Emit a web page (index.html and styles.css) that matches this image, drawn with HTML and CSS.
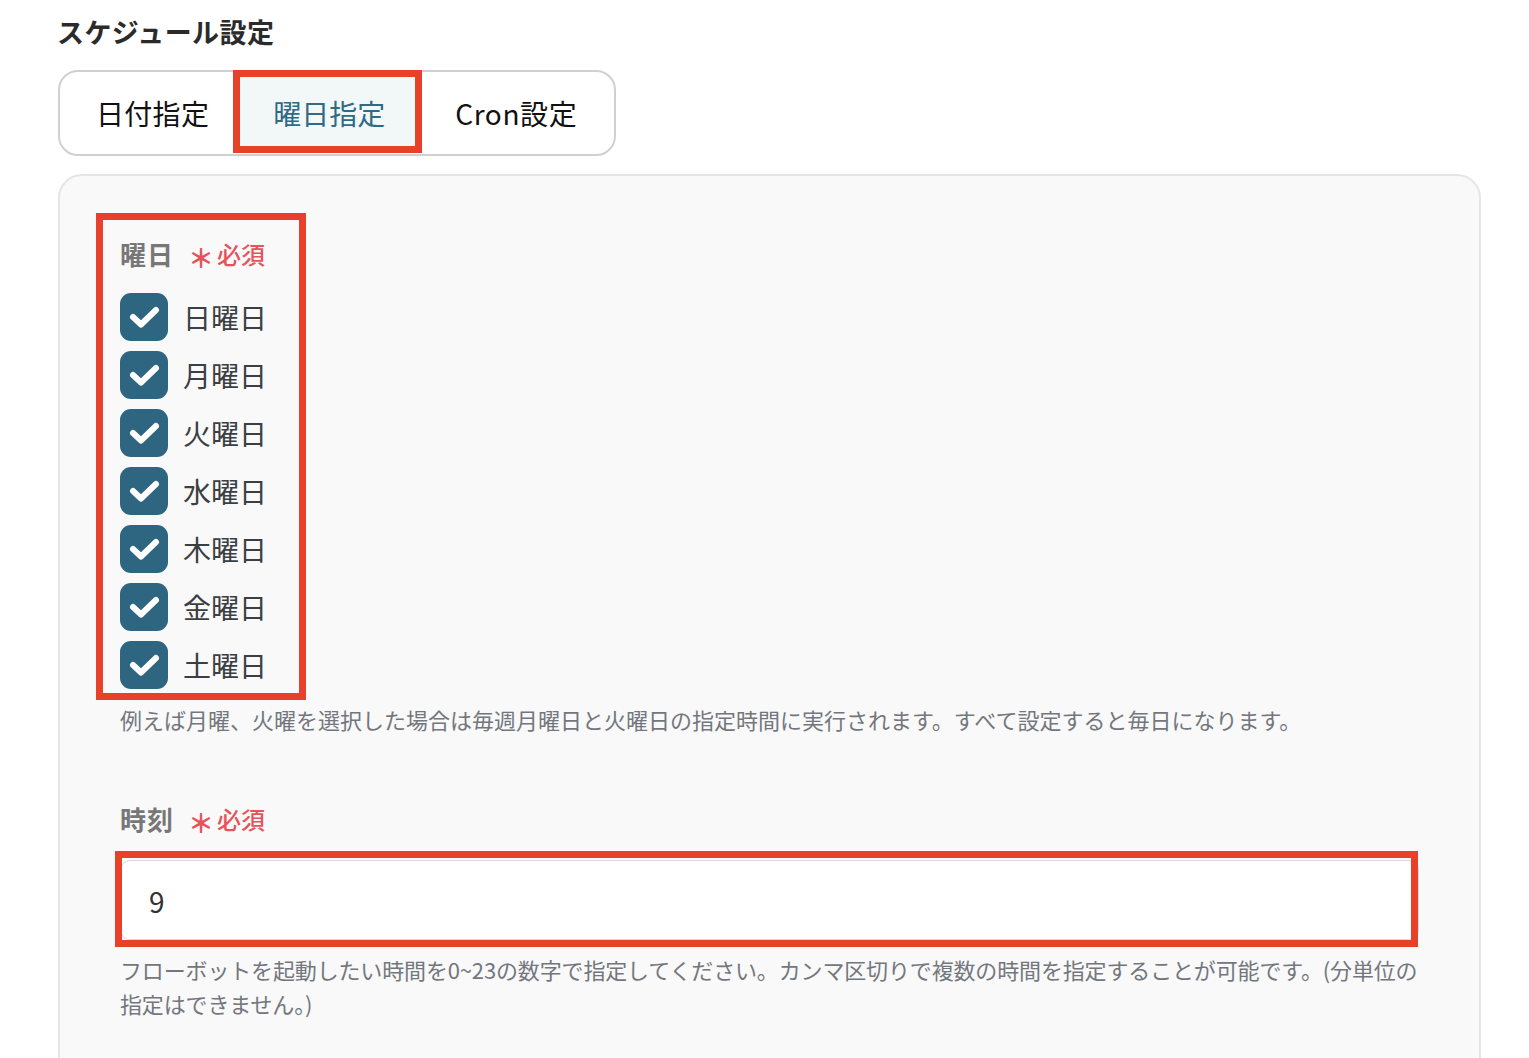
FILE: index.html
```html
<!DOCTYPE html>
<html lang="ja">
<head>
<meta charset="utf-8">
<title>スケジュール設定</title>
<link rel="stylesheet" href="styles.css">
</head>
<body>
<div class="page">
  <h2 class="title">スケジュール設定</h2>
  <div class="tabs">
    <div class="tab tab-date">日付指定</div>
    <div class="tab tab-week active"><span class="tab-text">曜日指定</span></div>
    <div class="tab tab-cron">Cron設定</div>
  </div>
  <div class="panel">
    <div class="field days">
      <div class="mark mark-days"></div>
      <div class="label">曜日<span class="req"><span class="ast">＊</span>必須</span></div>
      <div class="checklist">
        <div class="check-row"><span class="box"><svg viewBox="0 0 48 48"><path d="M13 24 L21 31.5 L36 17"/></svg></span><span class="check-label">日曜日</span></div>
        <div class="check-row"><span class="box"><svg viewBox="0 0 48 48"><path d="M13 24 L21 31.5 L36 17"/></svg></span><span class="check-label">月曜日</span></div>
        <div class="check-row"><span class="box"><svg viewBox="0 0 48 48"><path d="M13 24 L21 31.5 L36 17"/></svg></span><span class="check-label">火曜日</span></div>
        <div class="check-row"><span class="box"><svg viewBox="0 0 48 48"><path d="M13 24 L21 31.5 L36 17"/></svg></span><span class="check-label">水曜日</span></div>
        <div class="check-row"><span class="box"><svg viewBox="0 0 48 48"><path d="M13 24 L21 31.5 L36 17"/></svg></span><span class="check-label">木曜日</span></div>
        <div class="check-row"><span class="box"><svg viewBox="0 0 48 48"><path d="M13 24 L21 31.5 L36 17"/></svg></span><span class="check-label">金曜日</span></div>
        <div class="check-row"><span class="box"><svg viewBox="0 0 48 48"><path d="M13 24 L21 31.5 L36 17"/></svg></span><span class="check-label">土曜日</span></div>
      </div>
    </div>
    <p class="help help-days">例えば月曜、火曜を選択した場合は毎週月曜日と火曜日の指定時間に実行されます。すべて設定すると毎日になります。</p>
    <div class="field time">
      <div class="label">時刻<span class="req"><span class="ast">＊</span>必須</span></div>
      <div class="input-wrap">
        <div class="input">9</div>
        <div class="mark mark-input"></div>
      </div>
      <p class="help help-time">フローボットを起動したい時間を0~23の数字で指定してください。カンマ区切りで複数の時間を指定することが可能です。(分単位の指定はできません。)</p>
    </div>
  </div>
</div>
</body>
</html>
```
FILE: styles.css
```css
html, body {
  margin: 0;
  padding: 0;
  background: #ffffff;
}
body {
  font-family: "Noto Sans CJK JP", "Noto Sans", sans-serif;
  color: #333333;
  overflow: hidden;
}
.page {
  padding-left: 58px;
  width: 1423px;
}
.title {
  margin: 13px 0 0 -1px;
  font-size: 27px;
  line-height: 38px;
  font-weight: 700;
  letter-spacing: 0.4px;
  color: #2b2b2b;
}
.tabs {
  margin-top: 19px;
  display: flex;
  width: 554px;
  height: 82px;
  border: 2px solid #d0d0d0;
  border-radius: 20px;
  background: #ffffff;
}
.tab {
  display: flex;
  align-items: center;
  font-size: 28px;
  line-height: 40px;
  color: #111111;
  white-space: nowrap;
}
.tab-date {
  padding: 0 24px 0 36px;
  letter-spacing: 0.3px;
}
.tab-week {
  position: relative;
  padding: 0 37px 0 40px;
  color: #2f6a86;
}
.tab-week::before {
  content: "";
  position: absolute;
  left: 0;
  right: 0;
  top: -2px;
  bottom: 1px;
  border: 7px solid #e8412a;
  background: #f2f7f8;
}
.tab-text {
  position: relative;
}
.tab-cron {
  padding: 0 0 0 33px;
  letter-spacing: 0.6px;
}
.panel {
  margin-top: 18px;
  border: 2px solid #e5e5e5;
  border-radius: 24px;
  background: #f9f9f9;
  padding: 60px 60px 120px 60px;
}
.field {
  position: relative;
}
.days {
  width: 180px;
}
.mark {
  position: absolute;
  border: 7px solid #e8412a;
  pointer-events: none;
}
.mark-days {
  left: -24px;
  top: -23px;
  width: 196px;
  bottom: -11px;
}
.label {
  display: flex;
  align-items: center;
  font-size: 26px;
  line-height: 36px;
  font-weight: 700;
  letter-spacing: 1px;
  color: #777777;
  white-space: nowrap;
}
.req {
  margin-left: 14px;
  font-size: 24px;
  font-weight: 500;
  letter-spacing: 0;
  color: #e5535c;
  display: flex;
  align-items: center;
}
.ast {
  font-size: 26px;
  font-weight: 700;
  margin-right: 3px;
  position: relative;
  top: 3px;
}
.checklist {
  margin-top: 21px;
  display: flex;
  flex-direction: column;
  gap: 10px;
}
.check-row {
  display: flex;
  align-items: center;
  gap: 15px;
  height: 48px;
}
.box {
  width: 48px;
  height: 48px;
  border-radius: 11px;
  background: #2e6580;
  flex: none;
  display: block;
}
.box svg {
  width: 48px;
  height: 48px;
  display: block;
}
.box path {
  fill: none;
  stroke: #ffffff;
  stroke-width: 6;
  stroke-linecap: round;
  stroke-linejoin: round;
}
.check-label {
  font-size: 28px;
  line-height: 40px;
  color: #3b3e43;
}
.help {
  margin: 0;
  font-size: 22px;
  line-height: 34px;
  color: #73777d;
}
.help-days {
  margin-top: 13px;
}
.time {
  margin-top: 65px;
}
.input-wrap {
  position: relative;
  margin-top: 23px;
}
.input {
  height: 80px;
  box-sizing: border-box;
  border: 1px solid #dadada;
  border-radius: 10px;
  background: #ffffff;
  padding-left: 28px;
  padding-top: 2px;
  display: flex;
  align-items: center;
  font-size: 28px;
  color: #333333;
}
.mark-input {
  left: -5px;
  right: 1px;
  top: -9px;
  bottom: -7px;
}
.help-time {
  margin-top: 12px;
  letter-spacing: -0.15px;
}
```
